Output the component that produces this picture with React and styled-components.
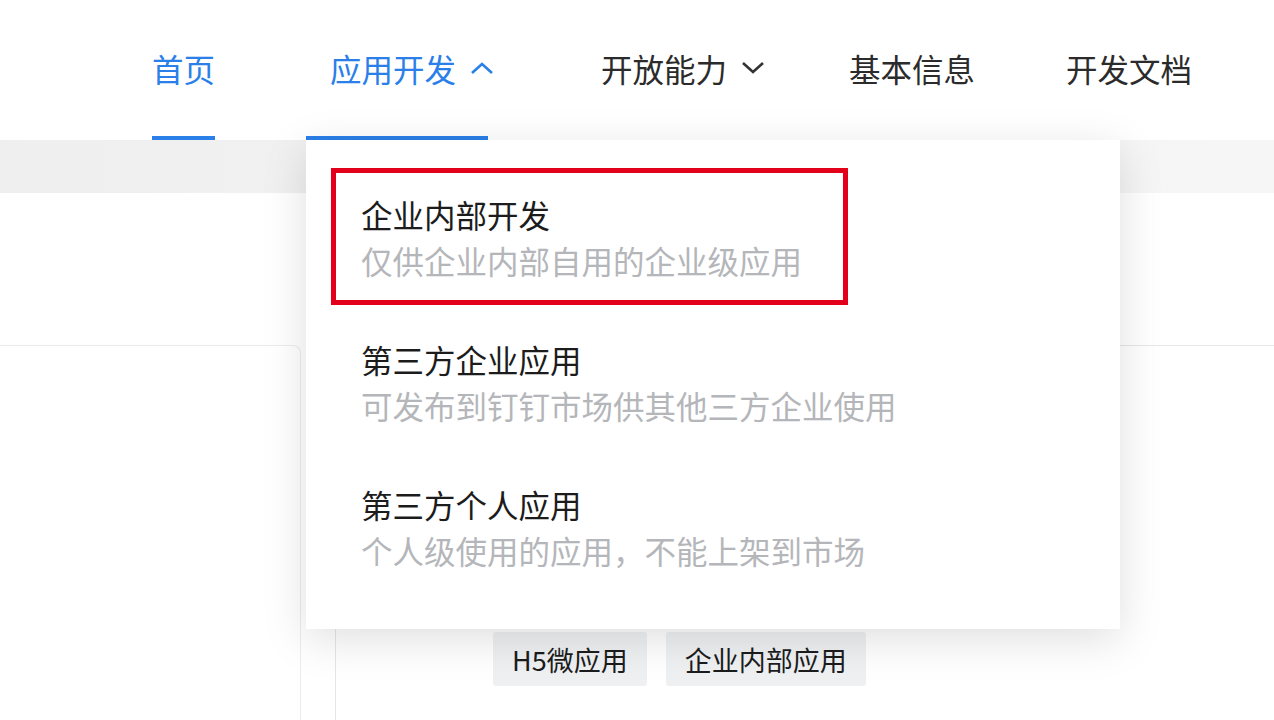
import React from 'react';
import styled, { createGlobalStyle } from 'styled-components';

const colors = {
    blue: '#2a7fe8',
    text: '#2b2b2b',
    title: '#1c1c1c',
    muted: '#b4b6ba',
    band: '#f2f2f2',
    tag_bg: '#eef0f2',
    red: '#e3001b',
};

const GlobalStyle = createGlobalStyle`
    html, body {
        margin: 0;
        padding: 0;
        background: #fff;
        font-family: "Noto Sans CJK SC", "Noto Sans", sans-serif;
        overflow: hidden;
    }
`;

const Page = styled.div`
    position: relative;
    width: 1274px;
    height: 720px;
    overflow: hidden;
    background: #fff;
`;

const Header = styled.header`
    height: 140px;
    display: flex;
    align-items: center;
    padding-left: 152px;
    background: #fff;
`;

const NavItem = styled.div`
    position: relative;
    height: 100%;
    box-sizing: border-box;
    padding-bottom: 4px;
    display: flex;
    align-items: center;
    margin-left: ${(p) => p.$ml || 0}px;
    font-size: 31.5px;
    color: ${(p) => (p.$active ? colors.blue : colors.text)};
    white-space: nowrap;

    &::after {
        content: '';
        display: ${(p) => (p.$active ? 'block' : 'none')};
        position: absolute;
        bottom: 0;
        left: ${(p) => p.$lineLeft || 0}px;
        right: ${(p) => p.$lineRight || 0}px;
        height: 4px;
        background: ${colors.blue};
    }
`;

const Chevron = styled.svg`
    margin-left: 14px;
    width: 24px;
    height: 14px;
`;

const Band = styled.div`
    height: 53px;
    background: linear-gradient(90deg, #efefef, #f3f3f3 60%, #f6f6f6);
`;

const Body = styled.div`
    display: flex;
    gap: 34px;
    padding-top: 152px;
`;

const SideCard = styled.div`
    width: 300px;
    height: 400px;
    border: 1px solid #ececec;
    border-left: none;
    border-radius: 0 8px 0 0;
    background: #fff;
`;

const MainCard = styled.div`
    flex: 1;
    height: 400px;
    border: 1px solid #e6e6e6;
    border-right: none;
    background: #fff;
    padding: 286px 0 0 157px;
`;

const TagRow = styled.div`
    display: flex;
    gap: 19px;
`;

const Tag = styled.span`
    height: 54px;
    padding: 0 19px;
    display: flex;
    align-items: center;
    background: ${colors.tag_bg};
    border-radius: 3px;
    font-size: 27px;
    color: ${colors.title};
`;

const Dropdown = styled.div`
    position: absolute;
    top: 140px;
    left: 306px;
    width: 814px;
    height: 489px;
    box-sizing: border-box;
    padding-top: 28px;
    background: #fff;
    box-shadow: 0 10px 42px rgba(0, 0, 0, 0.13);
`;

const Option = styled.div`
    width: 517px;
    height: 137px;
    box-sizing: border-box;
    margin: 0 0 8px 25px;
    padding: 18px 0 0 25px;
    border: 5px solid ${(p) => (p.$highlight ? colors.red : 'transparent')};
`;

const OptionTitle = styled.div`
    font-size: 31.5px;
    line-height: 46px;
    color: ${colors.title};
    white-space: nowrap;
`;

const OptionDesc = styled.div`
    font-size: 31.5px;
    line-height: 46px;
    color: ${colors.muted};
    white-space: nowrap;
`;

const options = [
    { title: '企业内部开发', desc: '仅供企业内部自用的企业级应用', highlight: true },
    { title: '第三方企业应用', desc: '可发布到钉钉市场供其他三方企业使用' },
    { title: '第三方个人应用', desc: '个人级使用的应用，不能上架到市场' },
];

export default function App() {
    return (
        <Page>
            <GlobalStyle />
            <Header>
                <NavItem $active>首页</NavItem>
                <NavItem $active $ml={115} $lineLeft={-24} $lineRight={6}>
                    应用开发
                    <Chevron viewBox="0 0 24 14">
                        <polyline points="2,12 12,3 22,12" fill="none" stroke={colors.blue} strokeWidth="2.6" />
                    </Chevron>
                </NavItem>
                <NavItem $ml={107}>
                    开放能力
                    <Chevron viewBox="0 0 24 14">
                        <polyline points="2,2 12,11 22,2" fill="none" stroke="#333" strokeWidth="2.6" />
                    </Chevron>
                </NavItem>
                <NavItem $ml={84}>基本信息</NavItem>
                <NavItem $ml={91}>开发文档</NavItem>
            </Header>
            <Band />
            <Body>
                <SideCard />
                <MainCard>
                    <TagRow>
                        <Tag>H5微应用</Tag>
                        <Tag>企业内部应用</Tag>
                    </TagRow>
                </MainCard>
            </Body>
            <Dropdown>
                {options.map((o) => (
                    <Option key={o.title} $highlight={o.highlight}>
                        <OptionTitle>{o.title}</OptionTitle>
                        <OptionDesc>{o.desc}</OptionDesc>
                    </Option>
                ))}
            </Dropdown>
        </Page>
    );
}
